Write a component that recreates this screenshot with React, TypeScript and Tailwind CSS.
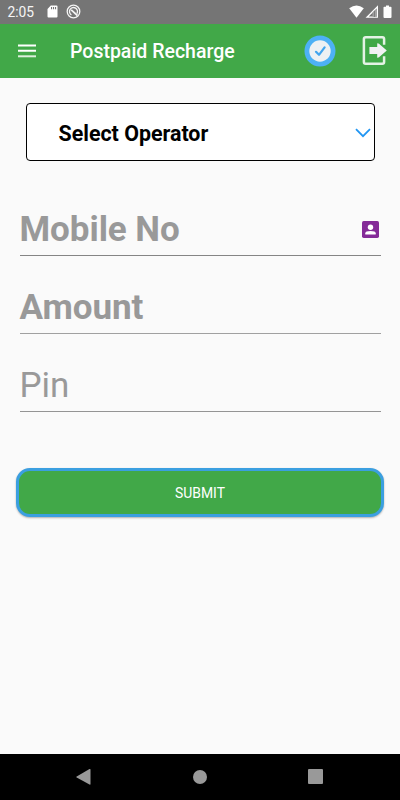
import * as React from "react";

interface FieldProps {
  label: string;
  weight: string;
  spacing: string;
  line: string;
  icon?: React.ReactNode;
}

function Field({ label, weight, spacing, line, icon }: FieldProps) {
  return (
    <div className={`ml-[19.5px] mr-[19.5px] flex h-[52px] shrink-0 items-center justify-between border-b ${line} ${spacing}`}>
      <span className={`text-[35px] leading-[52px] tracking-[-0.05px] text-[#999999] ${weight}`}>{label}</span>
      {icon}
    </div>
  );
}

function StatusBar() {
  return (
    <div className="flex h-[23.5px] shrink-0 items-center bg-[#757575] pl-[7.5px] pr-[6px]">
      <span className="w-[39px] pt-px text-[13.8px] leading-[24px] text-[#f5f5f5]">2:05</span>
      <svg width="11" height="13" viewBox="0 0 11 13" fill="#fff">
        <path fillRule="evenodd" d="M3.8 .5H9.5Q10.5 .5 10.5 1.5V11.5Q10.5 12.5 9.5 12.5H1.5Q.5 12.5 .5 11.5V4ZM4 2V4.3H5.1V2ZM6 2V4.3H7.1V2ZM8 2V4.3H9.1V2Z" />
      </svg>
      <svg className="ml-[8px]" width="15" height="15" viewBox="0 0 15 15" fill="none" stroke="#f5f5f5">
        <circle cx="7.5" cy="7.5" r="6.3" strokeWidth="1.3" />
        <path d="M5.4 10.9A4 4 0 1 1 10.9 9.6" strokeWidth="1.3" />
        <path d="M5.2 5.8L11.4 11.5" strokeWidth="1.7" />
      </svg>
      <svg className="ml-auto" width="45" height="14" viewBox="0 0 45 14" fill="#fff">
        <path d="M.2 3.3Q7.5-2.3 14.8 3.3L7.5 12.8Z" />
        <path fillRule="evenodd" d="M29 .3V12.7H16.5ZM27.7 3.7L19.7 11.5H27.7Z" />
        <path d="M23.5 7.5L27.9 3.3V11.8H23.5Z" fill="#a5a5a5" />
        <path d="M25.4 5.8V12" stroke="#757575" strokeWidth=".9" />
        <path d="M37 .5H40V1.7H41.6Q42.5 1.7 42.5 2.6V12Q42.5 13 41.6 13H35.4Q34.5 13 34.5 12V2.6Q34.5 1.7 35.4 1.7H37Z" />
      </svg>
    </div>
  );
}

function AppBar() {
  return (
    <header className="flex h-[54px] shrink-0 items-center bg-[#41a848] pl-[18px] pr-[13px]">
      <svg width="18" height="14" viewBox="0 0 18 14" fill="#fff">
        <path d="M0 .5H18V2.5H0ZM0 5.8H18V7.8H0Z" />
        <path d="M0 11.3H18V13.3H0Z" fill="#dcefdc" />
      </svg>
      <h1 className="ml-[34px] pt-[2px] text-[19.5px] font-medium leading-[54px] text-white">Postpaid Recharge</h1>
      <svg className="ml-auto" width="32" height="32" viewBox="0 0 32 32">
        <circle cx="16" cy="16" r="15.5" fill="#4db1f5" />
        <circle cx="16" cy="16" r="10.7" fill="#edf1f3" />
        <path d="M12 16.8L15 19.8L20.6 12.4" fill="none" stroke="#42a5ee" strokeWidth="2.2" strokeLinecap="round" strokeLinejoin="round" />
      </svg>
      <svg className="ml-[26px]" width="25" height="31" viewBox="0 0 25 31">
        <path d="M22.1 9.8V4Q22.1 2.3 20.4 2.3H3.7Q1.9 2.3 1.9 4.1V27Q1.9 28.8 3.7 28.8H20.4Q22.1 28.8 22.1 27.1V21.2" fill="none" stroke="#e4f2e5" strokeWidth="2.5" />
        <path d="M7.4 12H15.2V8.4Q16 8 17 8.8L24.8 15.6L17 22.2Q16 23 15.2 22.5V19H7.4Z" fill="#f1f1f4" />
      </svg>
    </header>
  );
}

function ContactIcon() {
  return (
    <svg className="mr-[1.5px]" width="17" height="17" viewBox="0 0 17 17">
      <rect width="17" height="17" rx="1.7" fill="#842b98" />
      <circle cx="8.5" cy="6.2" r="2.7" fill="#fff" />
      <path d="M3.3 13.5V12.3Q3.3 9.9 8.5 9.9T13.7 12.3V13.5Z" fill="#fff" />
    </svg>
  );
}

function NavigationBar() {
  return (
    <nav className="mt-auto flex h-[46.5px] shrink-0 items-center justify-between bg-black pl-[76px] pr-[77px]">
      <svg width="15" height="16" viewBox="0 0 15 16" fill="#999">
        <path d="M.7 7.4L13.5 .1Q14.5-.3 14.5 .8V15Q14.5 16 13.5 15.6L.7 8.5Q-.2 8 .7 7.4Z" />
      </svg>
      <div className="size-[14px] rounded-full bg-[#999]" />
      <div className="size-[15px] rounded-[1px] bg-[#999]" />
    </nav>
  );
}

export default function App() {
  return (
    <div className="flex h-[800px] w-[400px] flex-col overflow-hidden bg-[#fafafa] font-[Roboto,sans-serif]">
      <StatusBar />
      <AppBar />

      <main className="flex flex-col">
        <div className="ml-[25.5px] mr-[25.5px] mt-[25.5px] flex h-[58px] items-center justify-between rounded-[4px] border border-black bg-white pl-8 pr-[3px]">
          <span className="pt-[4px] text-[21.4px] font-bold text-black">Select Operator</span>
          <svg className="mt-px" width="16" height="10" viewBox="0 0 16 10" fill="none" stroke="#2196f3" strokeWidth="1.8">
            <path d="M1 1.2L8 8.2L15 1.2" />
          </svg>
        </div>

        <Field label="Mobile No" weight="font-bold" spacing="mt-[43px]" line="border-[#858585]" icon={<ContactIcon />} />
        <Field label="Amount" weight="font-bold" spacing="mt-[26px]" line="border-[#a0a0a0]" />
        <Field label="Pin" weight="font-normal" spacing="mt-[26px]" line="border-[#949494]" />

        <button className="mx-4 mt-[56px] h-[49px] rounded-[14px] border-[3px] border-[#3b9fe0] bg-[#41a848] pt-[2px] text-[13.9px] font-normal text-white shadow-[0_1px_2px_rgba(0,0,0,0.3)]">
          SUBMIT
        </button>
      </main>

      <NavigationBar />
    </div>
  );
}
